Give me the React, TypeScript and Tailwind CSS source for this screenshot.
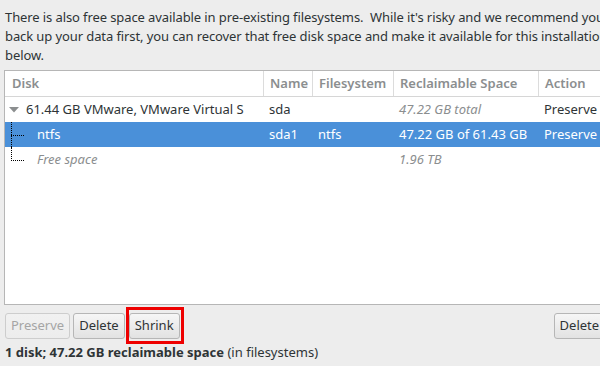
import { ReactNode } from 'react';

const cols = 'grid grid-cols-[258px_49px_81px_145px_90px]';

function TreeLine({ last }: { last?: boolean }) {
  return (
    <div className="absolute left-[6px] top-0 h-full w-[14px]">
      <div className={`absolute left-0 top-0 border-l border-dotted border-black ${last ? 'h-[14px]' : 'h-full'}`} />
      <div className="absolute left-0 top-[13px] w-[13px] border-t border-dotted border-black" />
    </div>
  );
}

function Btn({ children, disabled }: { children: ReactNode; disabled?: boolean }) {
  return (
    <button
      className={`shrink-0 whitespace-nowrap h-[26px] px-[5px] rounded-[3px] border bg-gradient-to-b text-[13px] ${
        disabled
          ? 'text-[#a5a5a5] from-[#f1f1f1] to-[#ececec] border-[#cdcdcd]'
          : 'text-[#2e3436] from-[#f6f6f6] to-[#e2e2e2] border-[#b6b6b6]'
      }`}
    >
      {children}
    </button>
  );
}

export default function App() {
  return (
    <div
      className="w-[600px] h-[366px] overflow-hidden bg-[#ededed] text-[#2e3436] text-[13px]"
      style={{ fontFamily: '"Noto Sans", "DejaVu Sans", sans-serif' }}
    >
      <p className="pl-[5px] pt-[8px] leading-[19px] w-[640px] whitespace-nowrap tracking-[-0.1px]">
        There is also free space available in pre-existing filesystems.&nbsp; While it's risky and we recommend you
        <br />
        back up your data first, you can recover that free disk space and make it available for this installation
        <br />
        below.
      </p>

      <div className="ml-[4px] mt-[5px] w-[640px] h-[235px] bg-white border border-[#b6b6b6]">
        <div className={`${cols} h-[26px] border-b border-[#d6d6d6] text-[#8b8e8f] font-semibold`}>
          <div className="pl-[7px] flex items-center">Disk</div>
          <div className="pl-[6px] flex items-center border-l border-[#dcdcdc]">Name</div>
          <div className="pl-[6px] flex items-center border-l border-[#dcdcdc]">Filesystem</div>
          <div className="pl-[6px] flex items-center border-l border-[#dcdcdc]">Reclaimable Space</div>
          <div className="pl-[6px] flex items-center border-l border-[#dcdcdc]">Action</div>
        </div>

        <div className={`${cols} h-[25px] items-center`}>
          <div className="flex items-center pl-[3px]">
            <svg width="12" height="12" viewBox="0 0 12 12" className="mr-[6px]">
              <path d="M1 3h10L6 8.5z" fill="#8b8e8f" />
            </svg>
            <span>61.44 GB VMware, VMware Virtual S</span>
          </div>
          <div className="pl-[6px]">sda</div>
          <div />
          <div className="pl-[6px] italic text-[#8b8e8f]">47.22 GB total</div>
          <div className="pl-[6px]">Preserve</div>
        </div>

        <div className={`${cols} h-[25px] items-center bg-[#4a90d9] text-white relative`}>
          <TreeLine />
          <div className="pl-[32px]">ntfs</div>
          <div className="pl-[6px]">sda1</div>
          <div className="pl-[6px]">ntfs</div>
          <div className="pl-[6px]">47.22 GB of 61.43 GB</div>
          <div className="pl-[6px]">Preserve</div>
        </div>

        <div className={`${cols} h-[25px] items-center relative`}>
          <TreeLine last />
          <div className="pl-[32px] italic text-[#8b8e8f]">Free space</div>
          <div />
          <div />
          <div className="pl-[6px] italic text-[#8b8e8f]">1.96 TB</div>
          <div />
        </div>
      </div>

      <div className="flex items-center w-[640px] pl-[5px] mt-[8px]">
        <div className="flex items-center">
          <Btn disabled>Preserve</Btn>
          <div className="ml-[3px]">
            <Btn>Delete</Btn>
          </div>
          <div className="relative ml-[4px]">
            <Btn>Shrink</Btn>
            <div className="absolute -top-[6px] -bottom-[5px] -left-[3px] -right-[4px] border-[3px] border-[#ee0000] pointer-events-none" />
          </div>
        </div>
        <div className="ml-[374px]">
          <Btn>Delete all</Btn>
        </div>
      </div>

      <p className="pl-[5px] mt-[4px] leading-[18px] whitespace-nowrap">
        <span className="font-bold">1 disk; 47.22 GB reclaimable space</span> (in filesystems)
      </p>
    </div>
  );
}
